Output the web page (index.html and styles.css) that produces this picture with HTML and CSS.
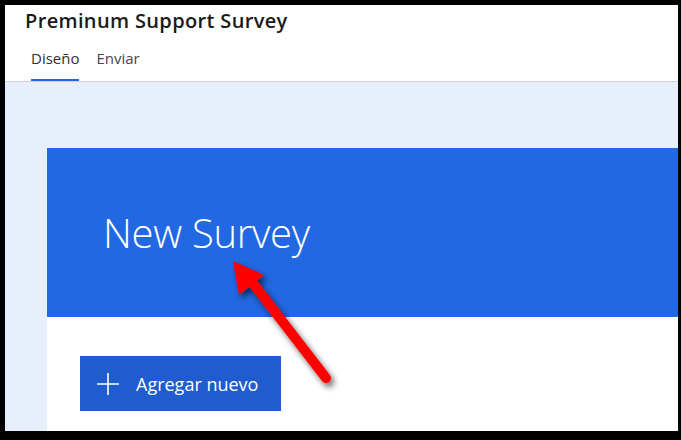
FILE: index.html
```html
<!DOCTYPE html>
<html lang="es">
<head>
<meta charset="utf-8">
<title>Preminum Support Survey</title>
<link rel="stylesheet" href="styles.css">
</head>
<body>
<div class="frame">
  <div class="app">
    <header class="header">
      <h1 class="title">Preminum Support Survey</h1>
      <nav class="tabs">
        <span class="tab active">Diseño</span>
        <span class="tab">Enviar</span>
      </nav>
    </header>
    <main class="canvas">
      <section class="card">
        <div class="banner">
          <h2 class="survey-title">New Survey</h2>
        </div>
        <div class="card-body">
          <button class="add-btn">
            <svg class="plus" width="22" height="22" viewBox="0 0 22 22"><path d="M11 0V22M0 11H22" stroke="#fff" stroke-width="1.6" fill="none"/></svg>
            <span>Agregar nuevo</span>
          </button>
        </div>
      </section>
    </main>
  </div>
  <svg class="arrow" width="681" height="440" viewBox="0 0 681 440">
    <defs>
      <filter id="sh" x="-20%" y="-20%" width="140%" height="140%">
        <feDropShadow dx="3" dy="4" stdDeviation="3" flood-color="#000" flood-opacity="0.6"/>
      </filter>
    </defs>
    <g filter="url(#sh)">
      <line x1="252" y1="282" x2="326" y2="378" stroke="#ff0000" stroke-width="10" stroke-linecap="round"/>
      <polygon points="233,261 264,275 239,295" fill="#ff0000"/>
    </g>
  </svg>
</div>
</body>
</html>
```

FILE: styles.css
```css
* { box-sizing: border-box; }
html, body { margin: 0; padding: 0; }
body {
  width: 681px;
  height: 440px;
  overflow: hidden;
  font-family: "Open Sans", "Noto Sans", sans-serif;
  background: #000;
}
.frame {
  position: relative;
  width: 681px;
  height: 440px;
  padding: 5px 3px 9px 5px;
  background: #000;
}
.app {
  width: 100%;
  height: 100%;
  display: flex;
  flex-direction: column;
  background: #e8effc;
  overflow: hidden;
}
.header {
  background: #fff;
  height: 77px;
  border-bottom: 1px solid #d2d2d2;
  padding: 0 0 0 20px;
  display: flex;
  flex-direction: column;
}
.title {
  margin: 0;
  font-size: 20px;
  font-weight: 600;
  line-height: 28px;
  color: #1b1a19;
  padding-top: 2px;
  letter-spacing: 0.35px;
}
.tabs {
  display: flex;
  gap: 17px;
  margin-top: 13px;
  padding-left: 6px;
}
.tab {
  font-size: 15px;
  line-height: 20px;
  color: #484644;
  padding-bottom: 11px;
  border-bottom: 2px solid transparent;
}
.tab.active {
  color: #323130;
  border-bottom-color: #2266e3;
}
.canvas {
  flex: 1;
  padding: 66px 0 0 42px;
  display: flex;
}
.card {
  flex: 1;
  display: flex;
  flex-direction: column;
  background: #fff;
}
.banner {
  background: #2268e3;
  height: 169px;
  padding: 0 0 0 56px;
  display: flex;
  align-items: center;
}
.survey-title {
  margin: 0;
  color: #fff;
  font-weight: 300;
  font-size: 40px;
  line-height: 48px;
  letter-spacing: -0.3px;
}
.card-body {
  flex: 1;
  padding: 39px 0 0 33px;
}
.add-btn {
  display: flex;
  align-items: center;
  gap: 17px;
  width: 201px;
  height: 55px;
  padding: 0 0 0 17px;
  border: none;
  background: #1f5ccd;
  color: #fff;
  font-family: "Open Sans", "Noto Sans", sans-serif;
  font-size: 18px;
}
.arrow {
  position: absolute;
  left: 0;
  top: 0;
  pointer-events: none;
}
```
